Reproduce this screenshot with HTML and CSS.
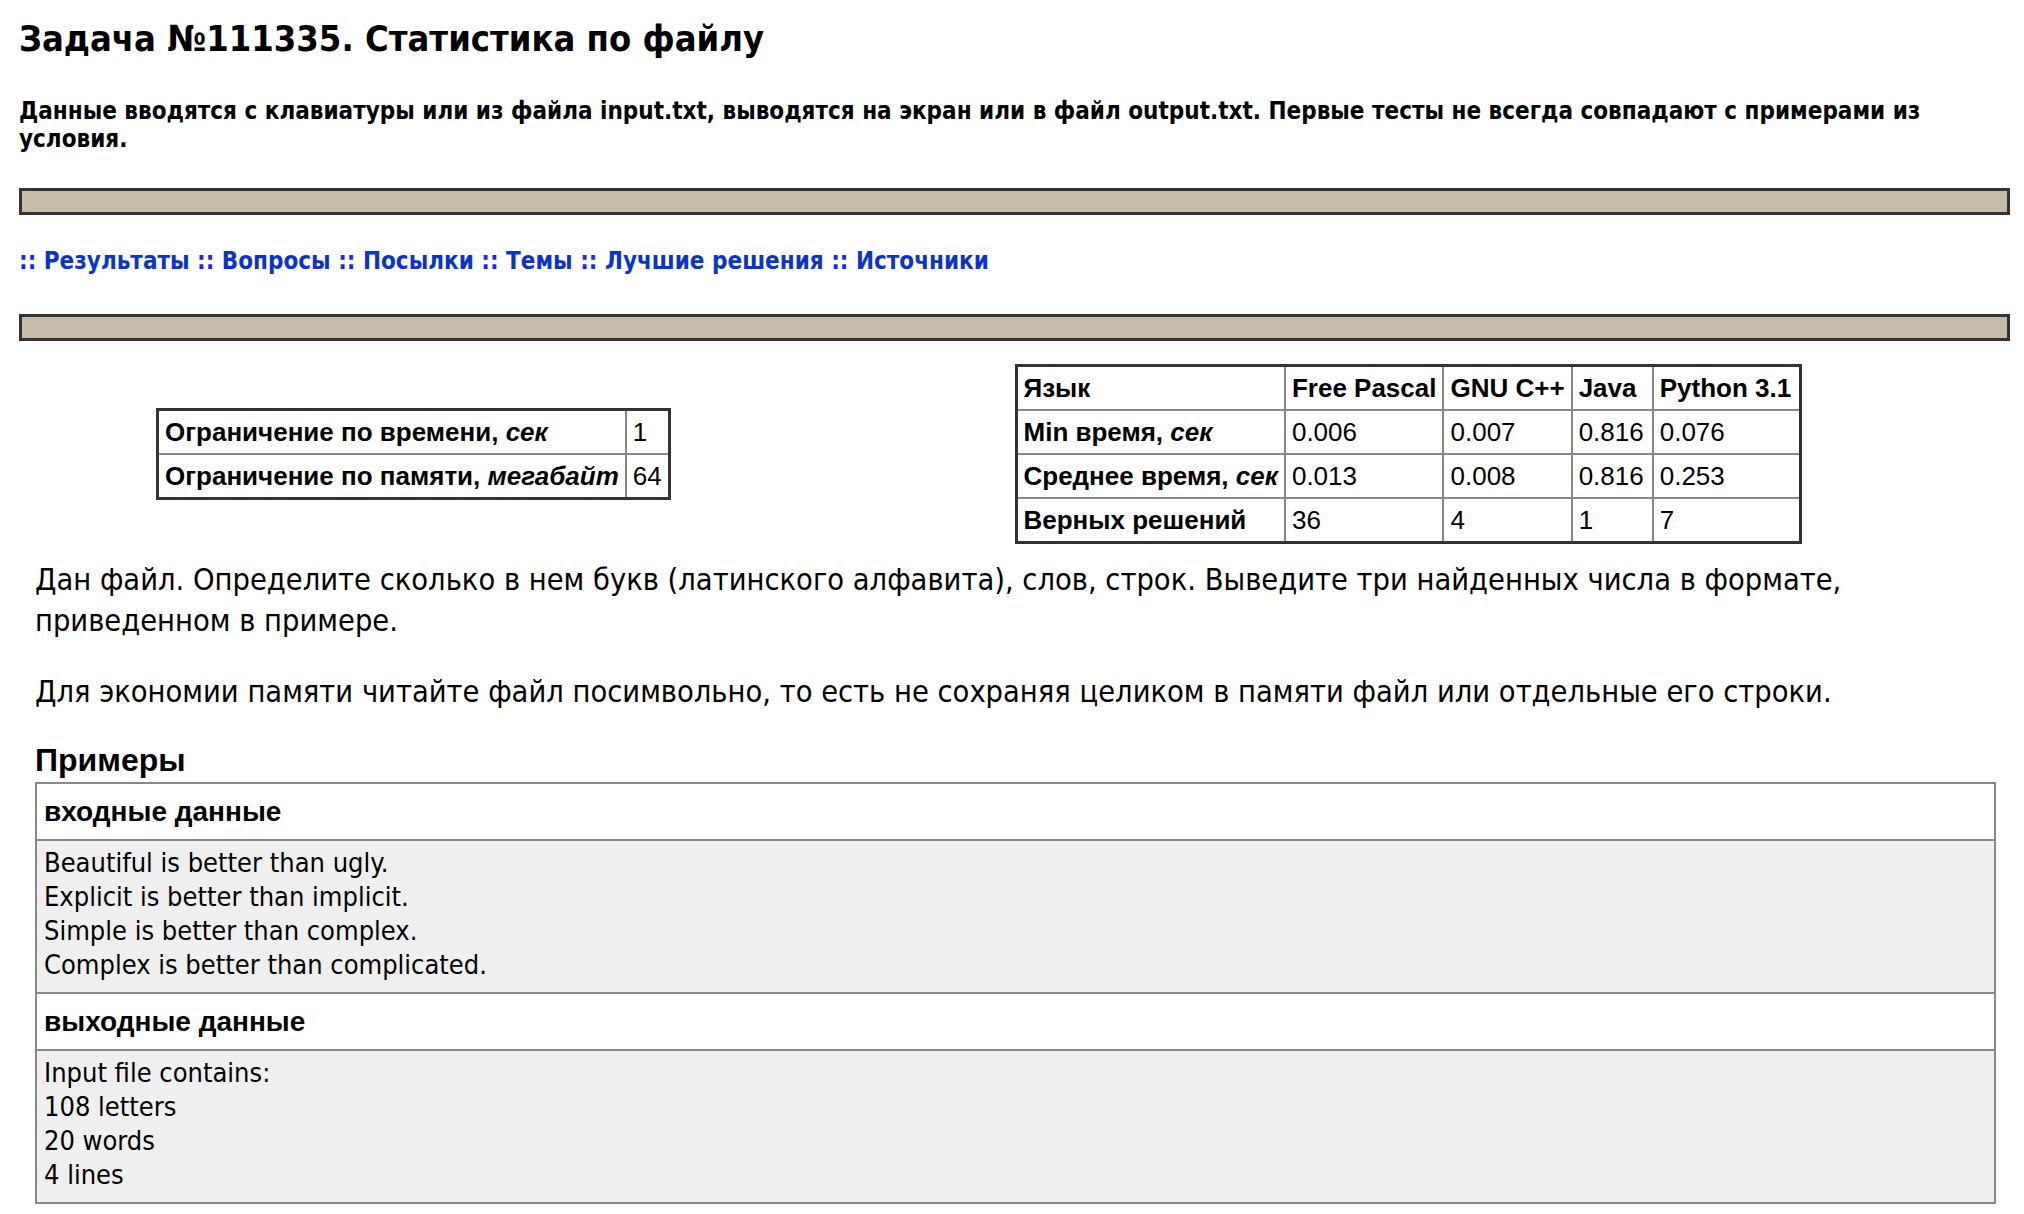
FILE: index.html
```html
<!DOCTYPE html>
<html lang="ru">
<head>
<meta charset="utf-8">
<title>Задача №111335. Статистика по файлу</title>
<link rel="stylesheet" href="styles.css">
</head>
<body>
<div class="page">
  <h1 class="title">Задача №111335. Статистика по файлу</h1>
  <p class="io-note">Данные вводятся с клавиатуры или из файла input.txt, выводятся на экран или в файл output.txt. Первые тесты не всегда совпадают с примерами из условия.</p>
  <div class="bar"></div>
  <nav class="nav"><span class="sep">::</span> <a href="#">Результаты</a> <span class="sep">::</span> <a href="#">Вопросы</a> <span class="sep">::</span> <a href="#">Посылки</a> <span class="sep">::</span> <a href="#">Темы</a> <span class="sep">::</span> <a href="#">Лучшие решения</a> <span class="sep">::</span> <a href="#">Источники</a></nav>
  <div class="bar"></div>

  <div class="info-row">
    <div class="info-col info-left">
      <table class="grid limits">
        <tr><th>Ограничение по времени, <i>сек</i></th><td>1</td></tr>
        <tr><th>Ограничение по памяти, <i>мегабайт</i></th><td>64</td></tr>
      </table>
    </div>
    <div class="info-col info-right">
      <table class="grid stats">
        <tr><th>Язык</th><th>Free Pascal</th><th>GNU C++</th><th>Java</th><th>Python 3.1</th></tr>
        <tr><th>Min время, <i>сек</i></th><td>0.006</td><td>0.007</td><td>0.816</td><td>0.076</td></tr>
        <tr><th>Среднее время, <i>сек</i></th><td>0.013</td><td>0.008</td><td>0.816</td><td>0.253</td></tr>
        <tr><th>Верных решений</th><td>36</td><td>4</td><td>1</td><td>7</td></tr>
      </table>
    </div>
  </div>

  <div class="statement">
    <p class="text">Дан файл. Определите сколько в нем букв (латинского алфавита), слов, строк. Выведите три найденных числа в формате, приведенном в примере.</p>
    <p class="text">Для экономии памяти читайте файл посимвольно, то есть не сохраняя целиком в памяти файл или отдельные его строки.</p>
    <h2 class="examples-title">Примеры</h2>
    <table class="examples">
      <tr><th>входные данные</th></tr>
      <tr><td><pre class="sample">Beautiful is better than ugly.
Explicit is better than implicit.
Simple is better than complex.
Complex is better than complicated.</pre></td></tr>
      <tr><th>выходные данные</th></tr>
      <tr><td><pre class="sample">Input file contains:
108 letters
20 words
4 lines</pre></td></tr>
    </table>
  </div>
</div>
</body>
</html>
```

FILE: styles.css
```css
html, body {
  margin: 0;
  padding: 0;
  background: #ffffff;
}

body {
  font-family: "DejaVu Sans Condensed", "DejaVu Sans", sans-serif;
  font-stretch: condensed;
  color: #000;
}

.page {
  padding: 0 14px 0 19px;
}

.title {
  margin: 0;
  padding-top: 17px;
  font-size: 36px;
  line-height: 44px;
  font-weight: 700;
}

.io-note {
  margin: 36px 0 0;
  font-size: 24px;
  line-height: 28px;
  font-weight: 700;
}

.bar {
  height: 21px;
  background: #c4bca8;
  border: 3px solid #333333;
}

.io-note + .bar {
  margin-top: 35px;
}

.nav {
  padding: 32px 0 0;
  height: 99px;
  box-sizing: border-box;
  font-size: 24px;
  line-height: 28px;
  font-weight: 700;
  margin: 0;
}

.nav .sep {
  color: #1f1fff;
}

.nav a {
  color: #0a33cc;
  text-decoration: none;
}

.info-row {
  display: grid;
  grid-template-columns: 1fr 1fr;
  align-items: center;
  margin-top: 23px;
}

.info-left {
  padding-left: 137px;
}

.grid {
  border-collapse: collapse;
  border: 3px solid #333333;
  font-family: "Liberation Sans", Arial, sans-serif;
  font-size: 26px;
}

.grid th,
.grid td {
  border: 2px solid #888888;
  height: 42px;
  padding: 0 6px;
  text-align: left;
  white-space: nowrap;
}

.grid th {
  font-weight: 700;
}

.grid td {
  font-weight: 400;
}

.stats td:nth-child(4),
.stats td:nth-child(5),
.stats th:nth-child(4),
.stats th:nth-child(5) {
  padding-right: 8px;
}

.statement {
  padding: 0 14px 0 16px;
}

.text {
  margin: 0;
  font-size: 30.5px;
  line-height: 41px;
  font-weight: 400;
}

.text:first-child {
  margin-top: 15px;
}

.text + .text {
  margin-top: 30px;
}

.examples-title {
  margin: 28px 0 0;
  font-family: "Liberation Sans", Arial, sans-serif;
  font-size: 32px;
  line-height: 40px;
  font-weight: 700;
}

.examples {
  width: 100%;
  margin-top: 2px;
  border-collapse: collapse;
  border: 2px solid #888888;
}

.examples th {
  background: #ffffff;
  border: 2px solid #888888;
  font-family: "Liberation Sans", Arial, sans-serif;
  font-weight: 700;
  font-size: 28px;
  text-align: left;
  height: 55px;
  padding: 0 7px;
}

.examples td {
  background: #efefef;
  border: 2px solid #888888;
  padding: 5px 7px 10px;
}

.sample {
  margin: 0;
  font-family: "DejaVu Sans Condensed", "DejaVu Sans", sans-serif;
  font-stretch: condensed;
  font-size: 27px;
  line-height: 34px;
}
```
